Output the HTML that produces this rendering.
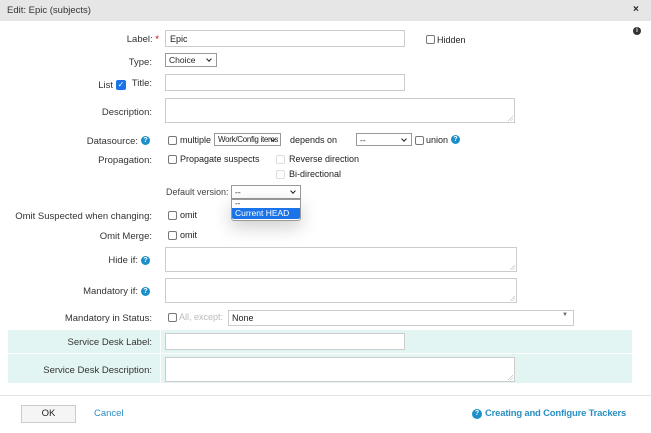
<!DOCTYPE html>
<html><head><style>
*{box-sizing:border-box;margin:0;padding:0}
body{width:651px;height:433px;background:#fff;font-family:"Liberation Sans",sans-serif;font-size:9px;color:#222;position:relative;overflow:hidden}
.a{position:absolute;white-space:nowrap}
.l{position:absolute;right:499px;text-align:right;white-space:nowrap;color:#333;font-size:9.5px;margin-top:2px}
.in{position:absolute;border:1px solid #ccc;background:#fff}
.cb{position:absolute;width:9px;height:9px;border:1px solid #777;border-radius:2px;background:#fff}
.cbd{border-color:#ddd}
.sel{position:absolute;border:1px solid #999;background:#fff;padding-left:3px;line-height:12px;font-size:8.5px;overflow:hidden;white-space:nowrap}
.sel:after{content:"";position:absolute;right:5px;top:3px;width:3px;height:3px;border-right:1.5px solid #222;border-bottom:1.5px solid #222;transform:rotate(45deg)}
.q{position:absolute;width:9px;height:9px;border-radius:50%;background:#1a8fc9;color:#fff;font-size:7px;font-weight:bold;text-align:center;line-height:9px}
.rs:after{content:"";position:absolute;right:1px;bottom:1px;width:5px;height:5px;background:linear-gradient(135deg,transparent 45%,#999 50%,transparent 55%,transparent 70%,#999 75%,transparent 80%)}
</style></head><body>
<div class="a" style="left:0;top:0;width:651px;height:21px;background:#e6e6e6"></div>
<div class="a" style="left:7px;top:5px;font-size:9.5px;color:#333">Edit: Epic (subjects)</div>
<div class="a" style="left:633px;top:4px;font-weight:bold;font-size:10px">×</div>
<div class="a" style="left:633px;top:27px;width:8px;height:8px;border-radius:50%;background:#333;color:#fff;font-size:6px;text-align:center;line-height:8px;font-weight:bold">i</div>

<div class="l" style="top:32px;right:492px">Label:<span style="color:#c00"> *</span></div>
<div class="in" style="left:165px;top:30px;width:240px;height:17px;padding:3px 4px">Epic</div>
<div class="cb" style="left:426px;top:35px"></div><div class="a" style="left:437px;top:35px">Hidden</div>

<div class="l" style="top:55px">Type:</div>
<div class="sel" style="left:165px;top:53px;width:52px;height:14px">Choice</div>

<div class="l" style="top:78px;right:538px">List</div>
<div class="a" style="left:116px;top:80px;width:10px;height:10px;background:#1a73e8;border-radius:2px;color:#fff;font-size:8px;line-height:10px;text-align:center">✓</div>
<div class="l" style="top:76px">Title:</div>
<div class="in" style="left:165px;top:74px;width:240px;height:17px"></div>

<div class="l" style="top:105px">Description:</div>
<div class="in rs" style="left:165px;top:98px;width:350px;height:25px"></div>

<div class="l" style="top:134px;right:513px">Datasource:</div><div class="q" style="left:141px;top:136px">?</div>
<div class="cb" style="left:168px;top:136px"></div><div class="a" style="left:180px;top:135px">multiple</div>
<div class="sel" style="left:214px;top:133px;width:67px;height:13px;font-size:8px;letter-spacing:-0.3px">Work/Config items</div>
<div class="a" style="left:290px;top:135px">depends on</div>
<div class="sel" style="left:356px;top:133px;width:56px;height:13px">--</div>
<div class="cb" style="left:415px;top:136px"></div><div class="a" style="left:426px;top:135px">union</div>
<div class="q" style="left:451px;top:135px">?</div>

<div class="l" style="top:153px">Propagation:</div>
<div class="cb" style="left:168px;top:155px"></div><div class="a" style="left:180px;top:154px">Propagate suspects</div>
<div class="cb cbd" style="left:276px;top:155px"></div><div class="a" style="left:289px;top:154px">Reverse direction</div>
<div class="cb cbd" style="left:276px;top:170px"></div><div class="a" style="left:289px;top:169px">Bi-directional</div>

<div class="a" style="left:166px;top:187px;color:#444">Default version:</div>
<div class="sel" style="left:231px;top:185px;width:70px;height:14px">--</div>
<div class="a" style="left:231px;top:199px;width:70px;height:22px;border:1px solid #999;border-radius:0 0 3px 3px;background:#fff;box-shadow:0 6px 18px rgba(0,0,0,.2)"></div>
<div class="a" style="left:235px;top:199px;font-size:8px">--</div>
<div class="a" style="left:232px;top:208px;width:68px;height:11px;background:#1a73e8;color:#fff;padding-left:3px;line-height:11px;font-size:8.5px;border-radius:0 0 2px 2px">Current HEAD</div>

<div class="l" style="top:209px">Omit Suspected when changing:</div>
<div class="cb" style="left:168px;top:211px"></div><div class="a" style="left:180px;top:210px">omit</div>
<div class="l" style="top:229px">Omit Merge:</div>
<div class="cb" style="left:168px;top:231px"></div><div class="a" style="left:180px;top:230px">omit</div>

<div class="l" style="top:253px;right:513px">Hide if:</div><div class="q" style="left:141px;top:256px">?</div>
<div class="in rs" style="left:165px;top:247px;width:352px;height:25px"></div>
<div class="l" style="top:284px;right:513px">Mandatory if:</div><div class="q" style="left:141px;top:287px">?</div>
<div class="in rs" style="left:165px;top:278px;width:352px;height:25px"></div>

<div class="l" style="top:311px">Mandatory in Status:</div>
<div class="cb" style="left:168px;top:313px"></div><div class="a" style="left:179px;top:312px;color:#bbb">All, except:</div>
<div class="in" style="left:228px;top:310px;width:346px;height:16px;padding:2px 3px">None<span style="position:absolute;right:5px;top:1px;font-size:6px;color:#666">▼</span></div>

<div class="a" style="left:8px;top:330px;width:624px;height:53px;background:#e3f5f2"></div>
<div class="a" style="left:8px;top:353px;width:624px;height:1px;background:#fff"></div>
<div class="a" style="left:160px;top:330px;width:1px;height:53px;background:#fff"></div>
<div class="l" style="top:335px">Service Desk Label:</div>
<div class="in" style="left:165px;top:333px;width:240px;height:17px"></div>
<div class="l" style="top:363px">Service Desk Description:</div>
<div class="in rs" style="left:165px;top:357px;width:350px;height:25px"></div>

<div class="a" style="left:0;top:395px;width:651px;height:1px;background:#e5e5e5"></div>
<div class="a" style="left:21px;top:405px;width:55px;height:18px;border:1px solid #ccc;background:#f5f5f5;text-align:center;line-height:16px;font-size:9.5px">OK</div>
<div class="a" style="left:94px;top:408px;color:#2a8fc4;font-size:9.5px">Cancel</div>
<div class="q" style="left:472px;top:409px;width:10px;height:10px;line-height:10px">?</div>
<div class="a" style="left:485px;top:408px;color:#2a8fc4;font-weight:bold;font-size:9.5px;letter-spacing:-0.2px">Creating and Configure Trackers</div>
</body></html>
